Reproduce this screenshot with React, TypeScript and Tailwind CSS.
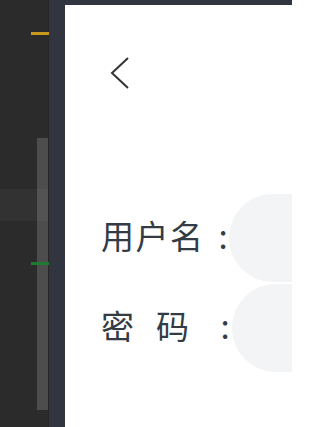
import React from "react";

export default function App() {
  return (
    <div className="flex w-[292px] h-[427px] overflow-hidden font-['Noto_Sans_CJK_SC',sans-serif]">
      {/* editor side strip */}
      <div className="relative w-[49px] shrink-0 bg-[#2b2b2b] border-r border-[#272727]">
        <div className="mt-[189px] h-[32px] bg-[#323232]" />
        <div className="absolute left-[37px] top-[138px] w-[11px] h-[272px] bg-[rgba(213,213,213,0.2)]" />
        <div className="absolute left-[31px] top-[32px] w-[18px] h-[3px] bg-[#c99a1f]" />
        <div className="absolute left-[31px] top-[262px] w-[18px] h-[3px] bg-[#1f7a2f]" />
      </div>
      {/* device frame */}
      <div className="flex flex-1 bg-[#31353f] pt-[5px] pl-[16px]">
        <div className="flex-1 bg-white overflow-hidden">
          <div className="pl-[45px] pt-[52px]">
            <svg width="19" height="32" viewBox="0 0 19 32" className="block">
              <polyline points="18,1 2,16 18,31" fill="none" stroke="#333333" strokeWidth="2" />
            </svg>
          </div>
          <div className="mt-[105px] flex flex-col gap-[2px] pl-[36px] text-[33px] leading-none text-[#333b45]">
            <div className="flex h-[88px] items-center">
              <div className="flex w-[128px] shrink-0 whitespace-nowrap pb-[5px]">
                <span className="w-[34.5px] shrink-0">用</span>
                <span className="w-[34.5px] shrink-0">户</span>
                <span className="w-[34.5px] shrink-0">名</span>
                <span className="ml-[1.5px] w-[34px] shrink-0 text-center">:</span>
              </div>
              <div className="h-[88px] flex-1 rounded-l-[44px] bg-[#f3f4f5]" />
            </div>
            <div className="flex h-[88px] items-center">
              <div className="flex w-[131px] shrink-0 whitespace-nowrap pb-[5px]">
                <span className="mr-[21px] w-[34px] shrink-0">密</span>
                <span className="mr-[18px] w-[34px] shrink-0">码</span>
                <span className="w-[34px] shrink-0 text-center">:</span>
              </div>
              <div className="h-[88px] flex-1 rounded-l-[44px] bg-[#f3f4f5]" />
            </div>
          </div>
        </div>
      </div>
    </div>
  );
}
